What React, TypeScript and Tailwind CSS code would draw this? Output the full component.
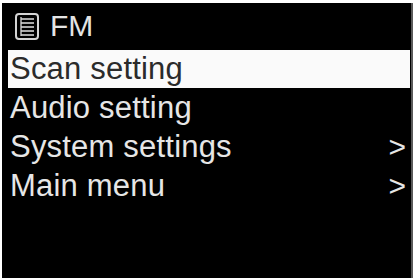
import React from "react";

const font = { fontFamily: '"Liberation Sans", Arial, sans-serif' };

function ListIcon() {
  return (
    <svg width="24" height="27" viewBox="0 0 24 27" fill="none" className="shrink-0">
      <rect x="1" y="1" width="22" height="25" rx="3" stroke="#d4d4d4" strokeWidth="2" />
      <line x1="6" y1="4" x2="6" y2="23" stroke="#bdbdbd" strokeWidth="1.5" />
      <line x1="6" y1="6" x2="19" y2="6" stroke="#d4d4d4" strokeWidth="1.6" />
      <line x1="6" y1="10" x2="19" y2="10" stroke="#d4d4d4" strokeWidth="1.6" />
      <line x1="6" y1="14" x2="19" y2="14" stroke="#d4d4d4" strokeWidth="1.6" />
      <line x1="6" y1="18" x2="19" y2="18" stroke="#d4d4d4" strokeWidth="1.6" />
      <line x1="6" y1="22" x2="19" y2="22" stroke="#d4d4d4" strokeWidth="1.6" />
    </svg>
  );
}

const items = [
  { label: "Scan setting", arrow: false, active: true },
  { label: "Audio setting", arrow: false, active: false },
  { label: "System settings", arrow: true, active: false },
  { label: "Main menu", arrow: true, active: false },
];

export default function App() {
  return (
    <div className="w-[415px] h-[278px] bg-white pt-[3px] pl-[2px] pr-[2px] overflow-hidden" style={font}>
      <div className="h-[275px] bg-black border-r-2 border-[#5a5a5a] flex flex-col">
        <div className="flex items-center h-[30px] mt-[8px] pl-[13px] gap-[11px]">
          <ListIcon />
          <span className="text-[30px] leading-[30px] text-[#e4e4e4]">FM</span>
        </div>
        <div className="flex flex-col mt-[9px] pl-[6px] pr-[1px]">
          {items.map((it) => (
            <div
              key={it.label}
              className={
                it.active
                  ? "flex items-center justify-between h-[38px] mb-[1px] bg-[#fafafa] text-[#2b2b2b] pl-[2px] pr-[4px]"
                  : "flex items-center justify-between h-[38px] mb-[1px] text-[#e6e6e6] pl-[2px] pr-[4px]"
              }
            >
              <span className="text-[31px] leading-[38px] tracking-[0.2px]">{it.label}</span>
              {it.arrow && <span className="text-[30px] leading-[38px]">&gt;</span>}
            </div>
          ))}
        </div>
      </div>
    </div>
  );
}
